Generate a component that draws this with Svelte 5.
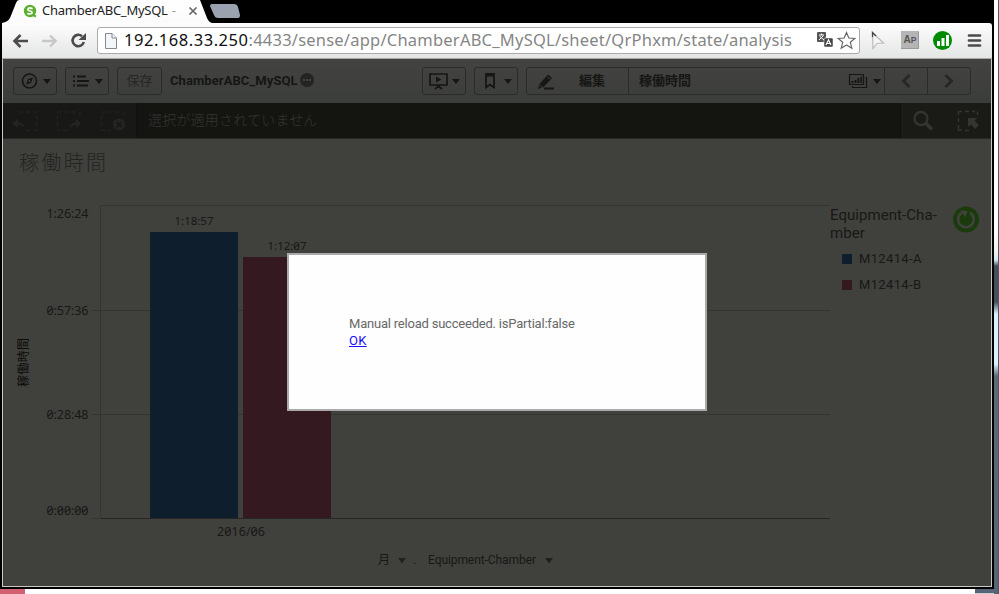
<script>
  const url = { host: '192.168.33.250', rest: ':4433/sense/app/ChamberABC_MySQL/sheet/QrPhxm/state/analysis' };
  const ticks = [
    { label: '1:26:24', y: 218 },
    { label: '0:57:36', y: 315 },
    { label: '0:28:48', y: 419 },
    { label: '0:00:00', y: 515 }
  ];
  const bars = [
    { label: '1:18:57', x: 150, y: 232, fill: '#0e1e2d' },
    { label: '1:12:07', x: 243, y: 257, fill: '#341a20' }
  ];
  const legend = [
    { name: 'M12414-A', color: '#0e1e2d' },
    { name: 'M12414-B', color: '#341a20' }
  ];
</script>

<div class="desktop">
  <div class="window">
    <div class="tabs">
      <svg width="994" height="23">
        <defs><linearGradient id="tab" x1="0" y1="0" x2="0" y2="1"><stop offset="0" stop-color="#fff" /><stop offset="1" stop-color="#fbfbfb" /></linearGradient></defs>
        <path d="M2 23 Q8 22 10 18 L16 3 Q17 0 19 0 H200 L207 18 Q209 23 213 23 Z" fill="url(#tab)" />
        <path d="M212 4 H234 Q237 4 238 7 L240 15 Q240 18 238 18 H218 Q215 18 214 15 L210 6 Q210 4 212 4Z" fill="#9aa2b0" />
        <circle cx="30" cy="11" r="6.2" fill="#5bb030" />
        <path d="M31 14 L36 16.500" stroke="#5bb030" stroke-width="2" />
        <path d="M32.6 8.7 Q30 7.3 28.2 8.4 Q27 10 29.5 10.8 Q32.8 11.5 32 13.2 Q30 14.8 27.4 13.2" fill="none" stroke="#fff" stroke-width="1.6" />
        <path d="M189.5 7.5 l7 7 m0 -7 l-7 7" stroke="#666" stroke-width="1.7" />
      </svg>
      <span class="tabtitle">ChamberABC_MySQL <i>-</i></span>
    </div>

    <div class="chrome">
      <svg class="nav" width="94" height="35" fill="none">
        <path d="M26 18 H13 M18.500 12 L12.500 18 L18.500 24" stroke="#4b4b4b" stroke-width="2.600" />
        <path d="M40 18 H53 M48 12.500 L53.700 18 L48 23.500" stroke="#c8c8c8" stroke-width="2.400" />
        <path d="M81.800 19 A5.700 5.700 0 1 1 80 13.200" stroke="#4b4b4b" stroke-width="2.600" />
        <path d="M84 10 V17 H76.500 Z" fill="#4b4b4b" />
      </svg>
      <div class="omnibox">
        <svg width="12" height="16" fill="#f3f6f9" stroke="#888"><path d="M.5 .5 H7 L11.500 5 V15.500 H.5 Z" fill="#f3f6f9" /><path d="M7 .5 V5 H11.500" /></svg>
        <span class="url"><b>{url.host}</b>{url.rest}</span>
        <svg class="oicons" width="42" height="20">
          <rect x="1" y="1" width="9" height="10" rx="1" fill="#555" />
          <path d="M3 4 H8 M5.500 2.500 V4 M3 9 L7.500 4.500 M3.500 5 L8 9" stroke="#fff" fill="none" />
          <rect x="8" y="7" width="9" height="9" rx="1" fill="#444" stroke="#fff" stroke-width=".5" />
          <path d="M10 14 L12.500 8.800 L15 14 M11 12.500 H14" stroke="#fff" fill="none" stroke-width="1.200" />
          <path d="M30.500 1.500 L32.800 7 L38.800 7.500 L34.300 11.300 L35.800 17.200 L30.500 14 L25.200 17.200 L26.700 11.300 L22.200 7.500 L28.200 7 Z" fill="#fff" stroke="#666" stroke-width="1.200" />
        </svg>
      </div>
      <svg class="ext" width="130" height="35">
        <path d="M12.500 9.500 L23.500 20 L17 20.500 L13 25.500 Z" fill="#f5f5f5" stroke="#bbb" stroke-width="1.200" />
        <path d="M12.500 14 V9.500 L16 13" fill="none" stroke="#444" stroke-width="1.300" />
        <rect x="41" y="8" width="18" height="18" fill="#b5b5b5" />
        <path d="M41 25.500 H58.500 V9" stroke="#999" fill="none" />
        <text x="50" y="20" text-anchor="middle" font-family="Liberation Sans" font-size="10" font-weight="700" fill="#555" textLength="13" lengthAdjust="spacingAndGlyphs">A<tspan font-size="8.500">P</tspan></text>
        <circle cx="82.500" cy="17.500" r="9.500" fill="#008c00" />
        <path d="M77 18 h3 v5 h-3z M81.500 15 h3 v8 h-3z M86 12 h3 v11 h-3z" fill="#fff" />
        <path d="M109 12.500 H120 M109 17.500 H120 M109 22.500 H120" stroke="#4b4b4b" stroke-width="2.700" stroke-linecap="round" />
      </svg>
    </div>

    <div class="page">
      <div class="toolbar">
        <div class="btn">
          <svg width="42" height="26"><circle cx="15.500" cy="13" r="7" fill="none" stroke="#161614" stroke-width="1.600" /><path d="M19 9.500 L17 15 L12 16.500 L14 11Z" fill="#161614" /><circle cx="15.500" cy="13" r="1" fill="#444" /><path d="M29 11 h8 l-4 5z" fill="#161614" /></svg>
        </div>
        <div class="btn">
          <svg width="42" height="26"><path d="M7 8.500h2 M7 13h2 M7 17.500h2 M11 8.500h9 M11 13h12 M11 17.500h11" stroke="#161614" stroke-width="2" /><path d="M29 11 h8 l-4 5z" fill="#161614" /></svg>
        </div>
        <div class="btn save">保存</div>
        <span class="app">ChamberABC_MySQL</span>
        <svg class="dots" width="16" height="16"><circle cx="8" cy="8" r="7" fill="#242422" /><path d="M4 8h2 M7 8h2 M10 8h2" stroke="#434340" stroke-width="2" /></svg>
        <div class="space"></div>
        <div class="btn">
          <svg width="42" height="26"><path d="M7 6 H24 V17 H7Z M15.500 17 V20 M12 21 L15.500 18 L19 21" fill="none" stroke="#161614" stroke-width="1.700" /><path d="M13 8.500 L18.500 11.500 L13 14.500Z" fill="#161614" /><path d="M29 11 h8 l-4 5z" fill="#161614" /></svg>
        </div>
        <div class="btn">
          <svg width="42" height="26"><path d="M11 6 H19 V19.500 L15 16.500 L11 19.500Z" fill="none" stroke="#161614" stroke-width="1.800" /><path d="M11 5.500h8v3h-8z" fill="#161614" /><path d="M29 11 h8 l-4 5z" fill="#161614" /></svg>
        </div>
        <div class="group">
          <div class="edit">
            <svg width="30" height="26"><path d="M11 21 L12.500 16 L21 6.500 L25 10 L16.500 19Z" fill="#161614" /><path d="M20.500 9 L23 11 M12.500 17 L15.500 19.500" stroke="#40403d" /><path d="M17 20.500 H27" stroke="#161614" stroke-width="2" /></svg>
            <b>編集</b>
          </div>
          <div class="sheetname"><b>稼働時間</b>
            <svg width="38" height="26"><path d="M3.500 6.500 H17.500 V16.500 H3.500Z M19.500 9.500 H20.500 V19.500 H6.500 V18" fill="none" stroke="#161614" stroke-width="1.200" /><path d="M5.500 13h2v2h-2z M8.500 12h2v3h-2z M11.500 10h2v5h-2z M14.500 8.500h1.500v6.500h-1.500z" fill="#161614" /><path d="M27 11 h8 l-4 5z" fill="#161614" /></svg>
          </div>
          <div class="step"><svg width="42" height="26"><path d="M24.500 7 L18.500 13 L24.500 19" fill="none" stroke="#272725" stroke-width="2.800" /></svg></div>
          <div class="step last"><svg width="42" height="26"><path d="M17.500 7 L23.500 13 L17.500 19" fill="none" stroke="#272725" stroke-width="2.800" /></svg></div>
        </div>
      </div>

      <div class="selections">
        <div class="history">
          <svg width="134" height="36" fill="none" stroke="#242422">
            <g stroke-dasharray="4 3"><path d="M16 9 H33.500 V27.500 H22" /><path d="M72 9 H54.500 V27.500 H66 M77 9 V16" /><path d="M116 9 H98.500 V27.500 H108 M121 9 V14" /></g>
            <path d="M9 20.500 L15 16 V19 Q21 19 22 26 Q20 22 15 22 V25Z M78 20.500 L73 16 V19 Q67 19 67 26 Q69 22 73 22 V25Z" fill="#242422" stroke="none" />
            <circle cx="116" cy="21.500" r="6" fill="#242422" stroke="none" /><path d="M113.500 19 l5 5 m0-5 l-5 5" stroke="#181816" stroke-width="1.800" />
          </svg>
        </div>
        <span>選択が適用されていません</span>
        <div class="tools">
          <svg width="90" height="36" fill="none" stroke="#343432"><circle cx="20" cy="15.500" r="6.500" stroke-width="2.300" /><path d="M25 20.500 L31 26.500" stroke-width="3.600" /><path d="M57.500 12 V8.500 H61 M64 8.500h4 M71 8.500h3 M76.500 8.500V12 M57.500 15v4 M57.500 22v5H61 M64 27.500h4" stroke-width="1.400" /><path d="M67 15 H76 L73.500 17.500 L78 22 L74 26 L70 21.500 L67 24Z" fill="#343432" stroke="none" /></svg>
        </div>
      </div>

      <div class="sheet">
        <svg class="chart" viewBox="3 139 988 447" width="988" height="447">
          <text x="19" y="169.500" class="title" textLength="87">稼働時間</text>
          <path d="M100.500 518 V205.500 H830 M92 310.500 H830 M92 414.500 H830 M92 518.500 H100" fill="none" stroke="#343432" />
          {#each bars as b}
            <rect x={b.x} y={b.y} width="88" height={518 - b.y} fill={b.fill} />
            <text x={b.x + 44} y={b.y - 7} text-anchor="middle" class="num small" textLength="39">{b.label}</text>
          {/each}
          <path d="M101 518.500 H830" stroke="#252523" />
          {#each ticks as t}
            <text x="46.500" y={t.y} class="num" textLength="42">{t.label}</text>
          {/each}
          <text x="217" y="536" class="num" textLength="48">2016/06</text>
          <text transform="translate(28 387) rotate(-90)" class="ylab" textLength="49">稼働時間</text>
          <text x="378" y="564" class="dim">月</text>
          <path d="M398 558 h8 l-4 5.500z M545 558 h8 l-4 5.500z" fill="#20201e" />
          <text x="413" y="564" class="dim">.</text>
          <text x="428" y="564" class="dim" textLength="108">Equipment-Chamber</text>
        </svg>
        <div class="legend">
          <div class="ltitle">Equipment-Cha-<br />mber</div>
          {#each legend as l}
            <div class="item"><i style:background={l.color}></i>{l.name}</div>
          {/each}
        </div>
        <svg class="reload" width="28" height="28"><circle cx="14" cy="13.500" r="13" fill="#1b3b0c" /><path d="M18 6.700 A7.800 7.800 0 1 1 9.500 7" fill="none" stroke="#42433f" stroke-width="2.400" /><path d="M8 4.500 L15.500 5 L13.500 11Z" fill="#42433f" /></svg>
      </div>
    </div>

    <div class="dialog">
      <div>Manual reload succeeded. isPartial:false</div>
      <a href="#ok">OK</a>
    </div>
  </div>
  <div class="behind"></div>
  <div class="below"><i></i><b></b></div>
</div>

<style>
  :global(body) { margin: 0; overflow: hidden; }
  .desktop { width: 999px; height: 594px; display: grid; grid-template: 589px 5px / 994px 5px; background: #fff; overflow: hidden; }
  .desktop, .desktop * { box-sizing: border-box; }
  svg { display: block; flex: none; }
  .window { position: relative; background: #000; display: flex; flex-direction: column; font-family: Roboto, 'Noto Sans CJK JP', sans-serif; }
  .tabs { height: 23px; position: relative; flex: none; }
  .tabtitle { position: absolute; left: 42px; top: 0; font: 13px/20px 'Noto Sans', sans-serif; color: #222; white-space: pre; letter-spacing: -.25px; }
  .tabtitle i { font-style: normal; color: #999; margin-left: 1px; }
  .chrome { height: 36px; margin: 0 2px; width: 990px; flex: none; display: flex; align-items: flex-start; background: linear-gradient(#fdfdfd, #e4e5e5); border-bottom: 1px solid #aaa; border-top-right-radius: 3px; }
  .nav { margin-right: 1px; }
  .omnibox { width: 763px; height: 27px; margin-top: 4px; border: 1px solid #aaa; border-radius: 3px; background: #fff; display: flex; align-items: center; padding-left: 7px; }
  .url { width: 700px; margin-left: 7px; font: 16.500px/24px 'Noto Sans', sans-serif; letter-spacing: .22px; color: #858585; white-space: nowrap; position: relative; top: -1px; }
  .url b { font-weight: 400; color: #111; letter-spacing: .53px; }
  .oicons { margin-left: -8px; }
  .page { width: 990px; height: 528px; margin-left: 2px; border: 1px solid #c9c9c6; border-top: 0; background: #40403d; display: flex; flex-direction: column; }
  .toolbar { height: 44px; padding: 8px 20px 0 10px; display: flex; gap: 8px; background: linear-gradient(#434441, #3b3d3a); color: #161614; flex: none; }
  .btn { width: 44px; height: 28px; border: 1px solid #2b2b29; border-radius: 3px; flex: none; }
  .save { width: 45px; font-size: 13px; line-height: 25px; text-align: center; color: #272725; }
  .app { font-weight: 700; font-size: 13px; line-height: 28px; width: 129px; white-space: nowrap; letter-spacing: .08px; }
  .dots { margin: 5px 0 0 -8px; }
  .space { flex: 1; }
  .group { width: 445px; height: 28px; border: 1px solid #2b2b29; border-radius: 3px; display: flex; font-size: 13px; line-height: 25px; }
  .edit { width: 102px; display: flex; border-right: 1px solid #2b2b29; }
  .edit b { margin-left: 22px; }
  .sheetname { flex: 1; padding-left: 10px; display: flex; justify-content: space-between; border-right: 1px solid #2b2b29; }
  .step { width: 42px; }
  .last { width: 43px; border-left: 1px solid #2b2b29; }
  .selections { height: 36px; flex: none; display: flex; background: #141411; color: #353533; font-size: 14px; line-height: 34px; font-weight: 300; letter-spacing: .2px; border-bottom: 1px solid #282826; }
  .history { width: 134px; background: #181816; border-right: 1px solid #111; margin-right: 11px; overflow: hidden; }
  .tools { margin-left: auto; width: 91px; background: #1a1a17; border-left: 1px solid #0e0e0c; overflow: hidden; }
  .sheet { position: relative; height: 447px; overflow: hidden; }
  .title { font-size: 20px; font-weight: 300; fill: #232321; }
  .num { font: 12.500px 'Noto Sans', sans-serif; font-feature-settings: 'zero'; fill: #181816; }
  .small { font-size: 11.500px; }
  .ylab { font-size: 12px; fill: #0b0b0a; }
  .dim { font-size: 12px; fill: #181816; }
  .legend { position: absolute; left: 827px; top: 67px; width: 125px; color: #181816; font-size: 15px; line-height: 18px; letter-spacing: .06px; }
  .item { display: flex; align-items: center; height: 26px; font-size: 13px; padding-left: 12px; letter-spacing: .35px; }
  .ltitle { margin-bottom: 4px; }
  .item i { width: 10px; height: 10px; margin-right: 7px; }
  .reload { position: absolute; left: 948.500px; top: 67px; }
  .dialog { position: absolute; left: 287px; top: 253px; width: 420px; height: 158px; border: 2px solid #aaa; background: #fefefe; padding: 60px; font-size: 13px; line-height: 17px; color: #686868; white-space: nowrap; letter-spacing: -.21px; }
  .dialog a { color: #1a0dff; letter-spacing: .3px; }
  .behind { grid-row: 1 / 3; grid-column: 2; background: linear-gradient(#fff 0 225px, #f0f3f0 250px, #d4e6f5 260px, #46505c 266px, #46505c 302px, #d8f0ff 314px, #d8f0ff 364px, #5d6977 376px, #566475); border-right: 1px solid #555; }
  .below { grid-row: 2; grid-column: 1; display: flex; justify-content: space-between; background: #fff; }
  .below i { width: 25px; background: #d16071; }
  .below b { width: 19px; background: #566475; border-bottom: 1px solid #ccc; }
</style>
